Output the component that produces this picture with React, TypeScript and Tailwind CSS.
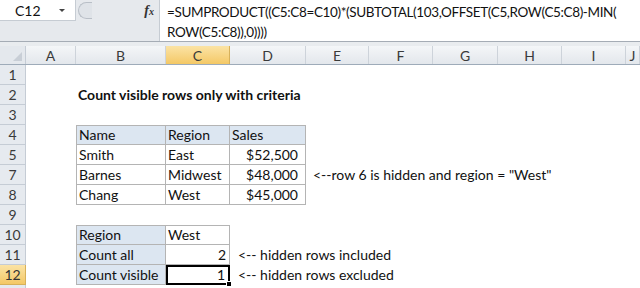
import React from 'react';

const cols = [
  { id: 'A', w: 'w-[50px]' },
  { id: 'B', w: 'w-[90px]' },
  { id: 'C', w: 'w-[64px]' },
  { id: 'D', w: 'w-[76px]' },
  { id: 'E', w: 'w-[63px]' },
  { id: 'F', w: 'w-[64px]' },
  { id: 'G', w: 'w-[65px]' },
  { id: 'H', w: 'w-[64px]' },
  { id: 'I', w: 'w-[64px]' },
  { id: 'J', w: 'w-[14px]' },
];

type Cell = { text?: string; bold?: boolean; right?: boolean; cls?: string; sel?: boolean };

// row number -> column id -> cell
const rows: { n: number; cells: Record<string, Cell> }[] = [
  { n: 1, cells: {} },
  { n: 2, cells: { B: { text: 'Count visible rows only with criteria', bold: true } } },
  { n: 3, cells: {} },
  {
    n: 4,
    cells: {
      B: { text: 'Name', cls: 'bg-[#dce6f1] border-l border-t border-r border-b border-[#b4b4b4]' },
      C: { text: 'Region', cls: 'bg-[#dce6f1] border-t border-r border-b border-[#b4b4b4]' },
      D: { text: 'Sales', cls: 'bg-[#dce6f1] border-t border-r border-b border-[#b4b4b4]' },
    },
  },
  {
    n: 5,
    cells: {
      B: { text: 'Smith', cls: 'border-l border-r border-b border-[#b4b4b4]' },
      C: { text: 'East', cls: 'border-r border-b border-[#b4b4b4]' },
      D: { text: '$52,500', right: true, cls: 'border-r border-b border-[#b4b4b4] pr-[7px]' },
    },
  },
  {
    n: 7,
    cells: {
      B: { text: 'Barnes', cls: 'border-l border-r border-b border-[#b4b4b4]' },
      C: { text: 'Midwest', cls: 'border-r border-b border-[#b4b4b4]' },
      D: { text: '$48,000', right: true, cls: 'border-r border-b border-[#b4b4b4] pr-[7px]' },
      E: { text: '<--row 6 is hidden and region = "West"', cls: 'pl-[7px]' },
    },
  },
  {
    n: 8,
    cells: {
      B: { text: 'Chang', cls: 'border-l border-r border-b border-[#b4b4b4]' },
      C: { text: 'West', cls: 'border-r border-b border-[#b4b4b4]' },
      D: { text: '$45,000', right: true, cls: 'border-r border-b border-[#b4b4b4] pr-[7px]' },
    },
  },
  { n: 9, cells: {} },
  {
    n: 10,
    cells: {
      B: { text: 'Region', cls: 'bg-[#dce6f1] border-l border-t border-r border-b border-[#b4b4b4]' },
      C: { text: 'West', cls: 'border-t border-r border-b border-[#b4b4b4]' },
    },
  },
  {
    n: 11,
    cells: {
      B: { text: 'Count all', cls: 'bg-[#dce6f1] border-l border-r border-b border-[#b4b4b4]' },
      C: { text: '2', right: true, cls: 'border-r border-b border-[#b4b4b4] pr-[3px]' },
      D: { text: '<-- hidden rows included', cls: 'pl-[8px]' },
    },
  },
  {
    n: 12,
    cells: {
      B: { text: 'Count visible', cls: 'bg-[#dce6f1] border-l border-r border-b border-[#b4b4b4]' },
      C: { text: '1', right: true, sel: true, cls: 'pr-[3px]' },
      D: { text: '<-- hidden rows excluded', cls: 'pl-[8px]' },
    },
  },
  { n: 13, cells: {} },
];

export default function App() {
  return (
    <div
      className="w-[640px] h-[288px] overflow-hidden bg-white text-[#111] relative"
      style={{ fontFamily: 'Lato, "Liberation Sans", sans-serif' }}
    >
      {/* formula bar */}
      <div className="flex h-[42px] border-b border-[#a5acb5]">
        <div className="w-[160px] shrink-0 flex flex-col bg-[#e6e9ed] border-r border-[#c6ccd3]">
          <div className="flex h-[21px]">
            <div className="w-[76px] shrink-0 bg-white border-r border-b border-[#c6ccd3] flex items-center justify-between pl-[15px] pr-[10px] text-[14px]">
              <span>C12</span>
              <span className="w-0 h-0 border-l-[3px] border-r-[3px] border-t-[3px] border-l-transparent border-r-transparent border-t-[#444]" />
            </div>
            <div className="flex-1 flex items-center justify-between pr-[5px]">
              <div className="w-[14px] h-[17px] rounded-l-full border-l border-t border-b border-[#b9bfc7] bg-[#dfe3e8] ml-[2px]" />
              <span className="italic font-bold text-[14px] text-[#333]" style={{ fontFamily: '"Liberation Serif", serif' }}>
                f<span className="text-[10px]">x</span>
              </span>
            </div>
          </div>
          <div className="flex-1" />
        </div>
        <div className="flex-1 min-w-0 pl-[7px] pt-[2px] text-[13.5px] tracking-[-0.37px] leading-[20px] whitespace-pre">
          <div>=SUMPRODUCT((C5:C8=C10)*(SUBTOTAL(103,OFFSET(C5,ROW(C5:C8)-MIN(</div>
          <div>ROW(C5:C8)),0))))</div>
        </div>
      </div>
      <div className="h-[4px] bg-[#e9ecef]" />

      {/* column headers */}
      <div className="flex h-[19px] border-b border-[#9eabb9] text-[14px] text-[#3a3a3a]">
        <div className="w-[26px] shrink-0 bg-[#e4e8ed] border-r border-[#c5ccd5] flex items-end justify-end p-[3px]">
          <svg width="9" height="9" viewBox="0 0 9 9">
            <path d="M9 0 L9 9 L0 9 Z" fill="#c8ced6" />
          </svg>
        </div>
        {cols.map((c) => (
          <div
            key={c.id}
            className={`${c.w} shrink-0 flex items-center justify-center border-r ${
              c.id === 'C'
                ? 'bg-gradient-to-b from-[#fbe3a4] to-[#f4c865] border-[#d7b15a]'
                : 'bg-gradient-to-b from-[#f4f6f8] to-[#e3e7ec] border-[#cdd3da]'
            }`}
          >
            {c.id}
          </div>
        ))}
      </div>

      {/* rows */}
      {rows.map((r) => (
        <div key={r.n} className="flex h-[20px] text-[14px]">
          <div
            className={`w-[26px] shrink-0 flex items-center justify-center border-r border-b text-[14px] ${
              r.n === 12
                ? 'bg-gradient-to-b from-[#fbe3a4] to-[#f4c865] border-[#d7b15a] text-[#333]'
                : 'bg-[#e6eaef] border-[#c5ccd5] text-[#3a3a3a]'
            }`}
          >
            {r.n < 13 ? r.n : ''}
          </div>
          {cols.map((c) => {
            const cell = r.cells[c.id];
            return (
              <div
                key={c.id}
                className={`${c.w} shrink-0 box-border relative flex items-center whitespace-nowrap leading-none ${
                  cell?.right ? 'justify-end' : 'pl-[2px]'
                } ${cell?.bold ? 'font-bold' : ''} ${cell?.cls ?? ''} ${
                  cell?.sel ? 'border-2 border-black' : ''
                }`}
              >
                <span className="relative z-10">{cell?.text}</span>
                {cell?.sel && (
                  <span className="absolute right-[-4px] bottom-[-4px] w-[6px] h-[6px] bg-black border border-white z-20" />
                )}
              </div>
            );
          })}
        </div>
      ))}
    </div>
  );
}
